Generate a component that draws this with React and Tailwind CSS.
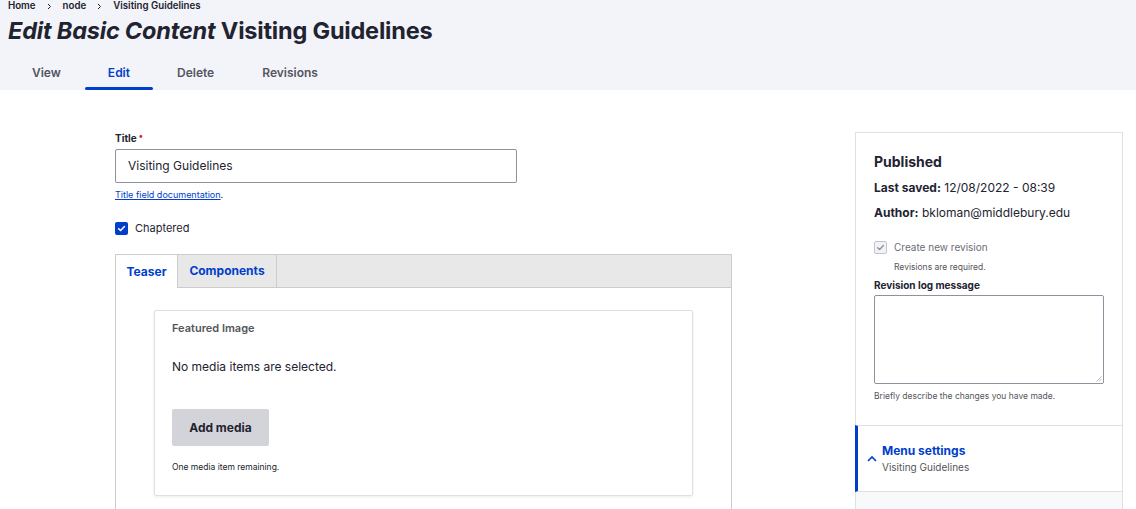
import React from "react";

function Crumb() {
  return (
    <svg width="5" height="7" viewBox="0 0 5 7">
      <path d="M1 1 L3.5 3.5 L1 6" fill="none" stroke="#222330" strokeWidth="1" />
    </svg>
  );
}

export default function App() {
  const font = { fontFamily: "Inter, 'Noto Sans', sans-serif" };
  return (
    <div className="w-[1136px] h-[509px] overflow-hidden bg-white text-[#222330]" style={font}>
      {/* Header */}
      <div className="bg-[#f3f4f9] h-[90px] pl-2">
        <div className="flex items-center gap-[11px] h-[13px] text-[9.7px] font-semibold text-[#222330]">
          <span>Home</span>
          <Crumb />
          <span>node</span>
          <Crumb />
          <span>Visiting Guidelines</span>
        </div>
        <h1 className="mt-[3px] h-[30px] leading-[30px] text-[23.5px] font-bold tracking-[-0.2px] text-[#222330]">
          <em>Edit Basic Content</em> Visiting Guidelines
        </h1>
        <nav className="mt-[10px] flex h-[34px] text-[12px] font-semibold text-[#545560]">
          <div className="px-6 flex items-center">View</div>
          <div className="px-[23px] flex items-center relative text-[#003ecc]">
            Edit
            <span className="absolute left-0 right-0 bottom-0 h-[3px] bg-[#003ecc] rounded-sm"></span>
          </div>
          <div className="px-6 flex items-center">Delete</div>
          <div className="px-6 flex items-center">Revisions</div>
        </nav>
      </div>

      {/* Main */}
      <div className="flex">
        {/* Left */}
        <div className="pl-[115px] pt-[41px] w-[855px]">
          <div className="flex items-center h-[14px] text-[10px] font-bold">
            Title<span className="text-[#dc2323] ml-[2px] text-[9px] relative -top-[2px]">•</span>
          </div>
          <div className="mt-[4px] w-[402px] h-[34px] border border-[#8e929c] rounded-[2px] flex items-center px-3 text-[12px] text-[#222330]">
            Visiting Guidelines
          </div>
          <div className="mt-[6px] h-[12px] leading-[12px] text-[9px]">
            <span className="text-[#003ecc] underline">Title field documentation</span>.
          </div>
          <div className="mt-[20px] flex items-center h-[14px]">
            <span className="w-[13px] h-[13px] rounded-[2px] bg-[#003ecc] flex items-center justify-center">
              <svg width="9" height="9" viewBox="0 0 10 10">
                <path d="M1.8 5.2 L4 7.3 L8.3 2.8" fill="none" stroke="white" strokeWidth="1.7" strokeLinecap="round" strokeLinejoin="round" />
              </svg>
            </span>
            <span className="ml-[7px] text-[11px] text-[#222330]">Chaptered</span>
          </div>

          {/* Tabs box */}
          <div className="mt-[19px] w-[617px] h-[260px] border border-[#cccccc] border-b-0">
            <div className="flex h-[33px] bg-[#e8e8e8] border-b border-[#cccccc]">
              <div className="w-[62px] -mb-px bg-white border-r border-[#cccccc] flex items-center justify-center text-[12px] font-bold text-[#003ecc]">
                Teaser
              </div>
              <div className="w-[99px] border-r border-[#cccccc] flex items-center justify-center text-[12px] font-bold text-[#003ecc]">
                Components
              </div>
            </div>
            <div className="pt-[22px] pl-[38px]">
              <div className="w-[539px] h-[186px] border border-[#e0e0e0] shadow-[0_1px_3px_rgba(0,0,0,0.08)] rounded-[2px] px-[17px]">
                <div className="mt-[10px] h-[15px] leading-[15px] text-[11px] font-semibold text-[#55565b]">Featured Image</div>
                <div className="mt-[23px] h-[15px] leading-[15px] text-[12px] text-[#222330]">No media items are selected.</div>
                <div className="mt-[35px] w-[97px] h-[37px] bg-[#d3d4d9] rounded-[2px] flex items-center justify-center text-[12px] font-bold text-[#222330]">
                  Add media
                </div>
                <div className="mt-[15px] h-[12px] leading-[12px] text-[8.5px] text-[#222330]">One media item remaining.</div>
              </div>
            </div>
          </div>
        </div>

        {/* Right */}
        <div className="mt-[42px] w-[268px] h-[377px] border border-[#e0e0e0] border-b-0 flex flex-col">
          <div className="pl-[18px] pr-[18px] h-[292px]">
            <div className="mt-[20px] h-[18px] leading-[18px] text-[14px] font-bold">Published</div>
            <div className="mt-[9px] h-[16px] leading-[16px] text-[12px]">
              <span className="font-bold">Last saved:</span> 12/08/2022 - 08:39
            </div>
            <div className="mt-[9px] h-[16px] leading-[16px] text-[12px]">
              <span className="font-bold">Author:</span> bkloman@middlebury.edu
            </div>
            <div className="mt-[20px] flex items-center h-[13px]">
              <span className="w-[13px] h-[13px] rounded-[2px] border border-[#c4c5cc] bg-[#f2f2f4] flex items-center justify-center">
                <svg width="9" height="9" viewBox="0 0 10 10">
                  <path d="M1.8 5.2 L4 7.3 L8.3 2.8" fill="none" stroke="#8e929c" strokeWidth="1.5" strokeLinecap="round" strokeLinejoin="round" />
                </svg>
              </span>
              <span className="ml-[7px] text-[10px] text-[#6b6d75]">Create new revision</span>
            </div>
            <div className="mt-[7px] ml-[20px] h-[12px] leading-[12px] text-[8.5px] text-[#55565b]">Revisions are required.</div>
            <div className="mt-[6px] h-[12px] leading-[12px] text-[10px] font-bold">Revision log message</div>
            <div className="mt-[4px] w-[230px] h-[89px] border border-[#8e929c] rounded-[2px] relative">
              <svg className="absolute right-[1px] bottom-[1px]" width="6" height="6" viewBox="0 0 6 6">
                <path d="M5.5 0.5 L0.5 5.5 M5.5 3 L3 5.5" stroke="#aaa" strokeWidth="0.8" />
              </svg>
            </div>
            <div className="mt-[6px] h-[12px] leading-[12px] text-[8.5px] text-[#55565b]">Briefly describe the changes you have made.</div>
          </div>
          <div className="h-[67px] border-t border-b border-[#e0e0e0] border-l-[3px] border-l-[#003ecc] -ml-px flex items-center">
            <svg className="ml-[8px]" width="12" height="8" viewBox="0 0 12 8">
              <path d="M2 6 L6 2 L10 6" fill="none" stroke="#003ecc" strokeWidth="1.6" />
            </svg>
            <div className="ml-[4px]">
              <div className="h-[16px] leading-[16px] text-[12px] font-bold text-[#003ecc]">Menu settings</div>
              <div className="mt-[1px] h-[14px] leading-[14px] text-[10px] text-[#55565b]">Visiting Guidelines</div>
            </div>
          </div>
          <div className="flex-1 bg-[#f8f9fa]"></div>
        </div>
      </div>
    </div>
  );
}
